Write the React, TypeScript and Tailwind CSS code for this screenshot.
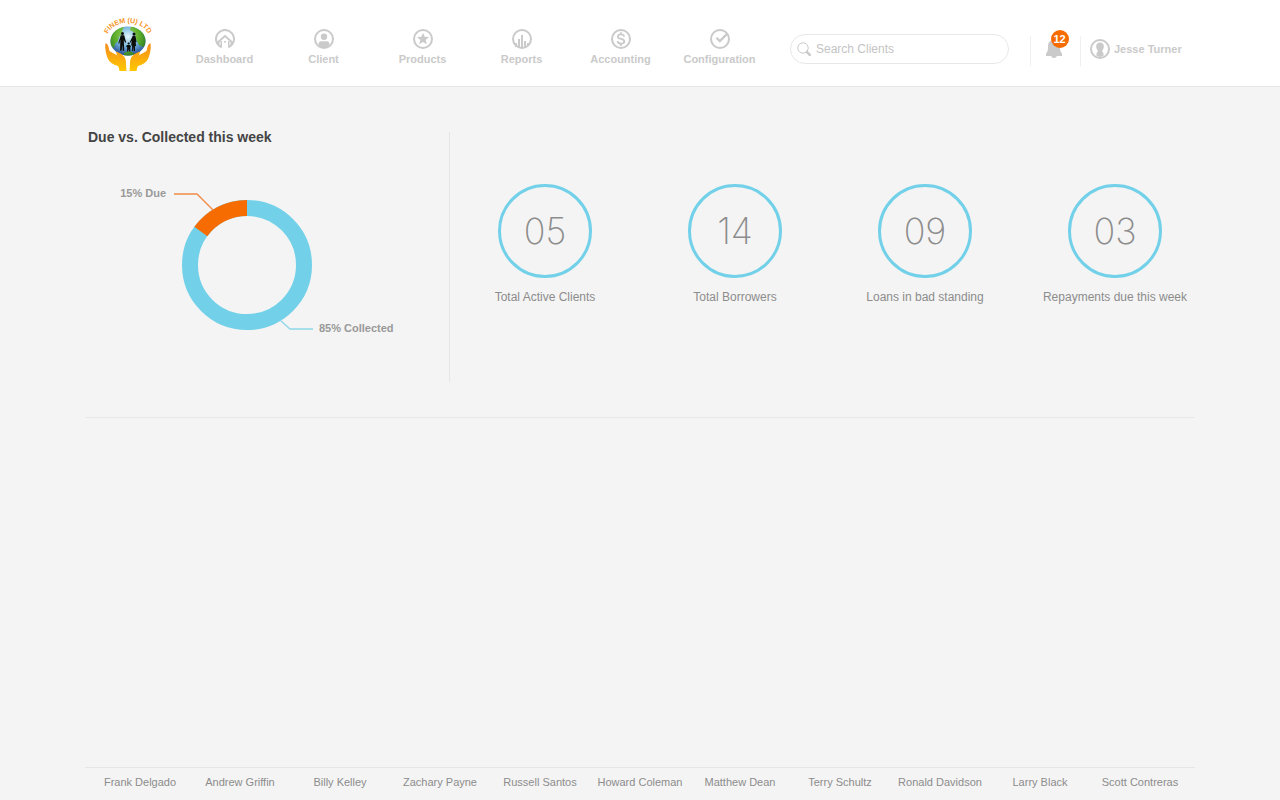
import React from 'react';

const ring = <circle cx="10" cy="10" r="9" fill="none" stroke="currentColor" strokeWidth="2" />;

function Icon({ children }: { children: React.ReactNode }) {
  return (
    <svg viewBox="0 0 20 20" className="h-5 w-5 shrink-0" aria-hidden="true">
      {children}
    </svg>
  );
}

const navItems = [
  {
    label: 'Dashboard',
    icon: (
      <Icon>
        <path d="M6 18A9 9 0 1 1 14 18" fill="none" stroke="currentColor" strokeWidth="2" />
        <path d="M2 14l8-7 8 7" fill="none" stroke="currentColor" strokeWidth="1.7" />
        <path d="M2 14.500l2.500-2.200V17zM18 14.500l-2.500-2.200V17zM5.500 12H7v7l-1.500-1zM13 12h1.500v6L13 19zM9.200 12h1.600v1.800H9.200z" fill="currentColor" />
      </Icon>
    ),
  },
  {
    label: 'Client',
    icon: (
      <Icon>
        {ring}
        <circle cx="10" cy="7.800" r="3.200" fill="currentColor" />
        <path d="M4.600 17v-2.200q0-2.500 2.600-2.500h5.600q2.600 0 2.600 2.500V17L10 19z" fill="currentColor" />
      </Icon>
    ),
  },
  {
    label: 'Products',
    icon: (
      <Icon>
        {ring}
        <path d="M10 3.800l1.700 4 4.300.3-3.300 2.800 1.100 4.300L10 12.900l-3.800 2.300 1.100-4.300L4 8.100l4.300-.3z" fill="currentColor" />
      </Icon>
    ),
  },
  {
    label: 'Reports',
    icon: (
      <Icon>
        {ring}
        <path d="M3 14h2v4H3zM6 10h2v9H6zM9 6h2v13H9zM12 12h2v7h-2zM15 14h2v3h-2z" fill="currentColor" />
      </Icon>
    ),
  },
  {
    label: 'Accounting',
    icon: (
      <Icon>
        {ring}
        <path
          d="M13.200 7.600C12.900 6.100 11.700 5.400 10 5.400S6.900 6.200 6.900 7.700c0 3.100 6.400 1.400 6.400 4.600 0 1.500-1.400 2.400-3.200 2.400-2 0-3.300-.9-3.500-2.600M10 3.300v2.200M10 14.700v2.200"
          fill="none"
          stroke="currentColor"
          strokeWidth="1.800"
        />
      </Icon>
    ),
  },
  {
    label: 'Configuration',
    icon: (
      <Icon>
        {ring}
        <path d="M6.500 8.800l3.300 3.300 7-7" fill="none" stroke="currentColor" strokeWidth="2.200" />
      </Icon>
    ),
  },
];

const stats = [
  { value: '05', label: 'Total Active Clients' },
  { value: '14', label: 'Total Borrowers' },
  { value: '09', label: 'Loans in bad standing' },
  { value: '03', label: 'Repayments due this week' },
];

const people = [
  'Frank Delgado',
  'Andrew Griffin',
  'Billy Kelley',
  'Zachary Payne',
  'Russell Santos',
  'Howard Coleman',
  'Matthew Dean',
  'Terry Schultz',
  'Ronald Davidson',
  'Larry Black',
  'Scott Contreras',
];

function Logo() {
  return (
    <svg viewBox="0 0 56 62" className="h-[62px] w-14" role="img" aria-label="Finem (U) Ltd">
      <defs>
        <radialGradient id="globe" cx="0.5" cy="0.35" r="0.65">
          <stop offset="0" stopColor="#e4f5fb" />
          <stop offset="0.5" stopColor="#7ab8dc" />
          <stop offset="1" stopColor="#234b96" />
        </radialGradient>
        <radialGradient id="land" gradientUnits="userSpaceOnUse" cx="27" cy="24" r="21">
          <stop offset="0" stopColor="#a4d66a" />
          <stop offset="0.6" stopColor="#5aae28" />
          <stop offset="1" stopColor="#2f7a2a" />
        </radialGradient>
        <linearGradient id="palm" x1="0" y1="0" x2="0" y2="1">
          <stop offset="0" stopColor="#f58a1e" />
          <stop offset="1" stopColor="#ffc800" />
        </linearGradient>
        <clipPath id="disc">
          <ellipse cx="28" cy="29" rx="17.500" ry="14.500" />
        </clipPath>
        <path id="arc" d="M7 25C11 6 45 6 49 25" />
      </defs>
      <text fill="#f7941d" className="font-['Liberation_Sans',sans-serif] text-[7px] font-bold">
        <textPath href="#arc" startOffset="50%" textAnchor="middle">
          FINEM (U) LTD
        </textPath>
      </text>
      <ellipse cx="28" cy="29" rx="17.500" ry="14.500" fill="url(#globe)" />
      <g clipPath="url(#disc)" fill="url(#land)">
        <path d="M9 28q2-9 9-12l6-1-2 4 1 2-4 4-1 4-3 3-1 4-5-3z" />
        <path d="M31 15l7 0 9 8 1 8-5 4-4-2-3-6-1-6-5-3z" />
        <path d="M24 41l5-2 5 2 1 4H23z" />
      </g>
      <g fill="#0b0d08">
        <circle cx="22.500" cy="21.500" r="1.500" />
        <path d="M20.800 23.300h3.400l1.900 7-1 .5-1.300-3 .4 11h-1.500l-.4-6-.7 6h-1.500l.2-11-1 4-1-.5z" />
        <circle cx="34" cy="22" r="1.500" />
        <path d="M32.800 23.700h2.600l1.200 6.300-.9.300.4 3.700h-1.100v5h-1.100l-.3-5-.4 5h-1.100v-5.500h-.9l.4-5-1.300 2.500-.6-.8z" />
        <circle cx="28.700" cy="31.500" r="1.100" />
        <path d="M27.300 33h2.800l1 2-.9.300.1 4.200h-1l-.6-2.500-.6 2.500h-1l.1-4.200-1.300-1z" />
      </g>
      <path
        d="M5.500 31q2.500 1 3 4l1 4q4 2.500 8 4.500-2-3-1-4 4.500 1.500 8 5.500 2 3 1.500 7l.5 7h-7q-.5-4-1.500-5Q10 52 7.500 46 4.500 38 5.500 31z"
        fill="url(#palm)"
      />
      <path
        d="M50.500 31q-2.500 1-3 4l-1 4q-4 2.500-8 4.500 2-3 1-4-4.500 1.500-8 5.500-2 3-1.500 7l-.5 7h7q.5-4 1.500-5Q46 52 48.500 46 51.500 38 50.500 31z"
        fill="url(#palm)"
      />
    </svg>
  );
}

export default function App() {
  return (
    <div className="flex min-h-screen flex-col bg-[#f4f4f4] font-['Liberation_Sans',Arial,sans-serif] text-[#8c8c8c]">
      <header className="border-b border-[#e5e5e5] bg-white">
        <div className="mx-auto flex h-[86px] max-w-[1110px] items-center text-[#cacaca]">
          <a href="#home" className="flex w-[90px] shrink-0 pl-[15px]">
            <Logo />
          </a>
          <nav className="mt-2 grid w-[594px] grid-cols-6">
            {navItems.map((item) => (
              <a
                key={item.label}
                href={`#${item.label.toLowerCase()}`}
                className="flex flex-col items-center gap-1 text-[11px] leading-3 font-bold"
              >
                {item.icon}
                {item.label}
              </a>
            ))}
          </nav>
          <label className="mt-3 ml-[21px] flex h-[30px] w-[219px] items-center gap-1 rounded-full border border-[#e8e8e8] px-1.5">
            <svg viewBox="0 0 15 15" className="h-[15px] w-[15px] shrink-0" aria-hidden="true">
              <circle cx="6" cy="6" r="5.200" fill="none" stroke="currentColor" strokeWidth="1" />
              <path d="M9.800 9.800l3 3" fill="none" stroke="currentColor" strokeWidth="2.600" strokeLinecap="round" />
            </svg>
            <input
              type="search"
              aria-label="Search Clients"
              placeholder="Search Clients"
              className="w-full min-w-0 bg-transparent text-[12px] outline-none placeholder:text-[#c4c4c4]"
            />
          </label>
          <div className="mt-4 ml-[21px] flex h-[30px] w-[51px] items-center justify-center border-x border-[#f0f0f0] pr-1">
            <button type="button" aria-label="Notifications, 12 unread" className="relative -mt-1 h-[18px] w-4">
              <svg viewBox="0 0 16 18" className="h-[18px] w-4" aria-hidden="true">
                <path
                  d="M8 0c4 0 6 2.500 6 6 0 4 .3 6 2 7.500V16h-5.200c-.2 1.300-1.200 2-2.800 2s-2.600-.7-2.800-2H0v-2.500C1.700 12 2 10 2 6c0-3.500 2-6 6-6z"
                  fill="currentColor"
                />
              </svg>
              <span className="absolute -top-2.5 left-[5px] flex h-[18px] w-[18px] items-center justify-center rounded-full bg-[#f76c00] text-[11px] font-bold text-white">
                12
              </span>
            </button>
          </div>
          <a href="#profile" className="mt-3 ml-[9px] flex items-center gap-1 text-[11px] font-bold whitespace-nowrap">
            <Icon>
              {ring}
              <path
                d="M10 3.500c2.700 0 4 1.700 3.800 4.300-.1 1.800-.8 3-1.500 3.800-.2 1.500.2 2 1.200 2.400V17L10 18l-3.500-1v-3c1-.4 1.400-.9 1.200-2.400-.7-.8-1.400-2-1.500-3.800C6 5.200 7.300 3.500 10 3.500z"
                fill="currentColor"
              />
            </Icon>
            Jesse Turner
          </a>
        </div>
      </header>

      <main className="mx-auto flex w-full max-w-[1110px] grow flex-col">
        <div className="flex border-b border-[#e8e8e8] pt-[45px] pb-[35px]">
          <section className="h-[250px] w-[365px] shrink-0 border-r border-[#e5e5e5] pl-[3px]">
            <h1 className="-mt-1 text-[14px] leading-[18px] font-bold text-[#444444]">Due vs. Collected this week</h1>
            <svg viewBox="88 146 361 200" className="h-[200px] w-full" role="img" aria-label="15% due, 85% collected">
              <g fill="none" strokeWidth="16">
                <circle cx="247" cy="265" r="57" stroke="#72d1e9" />
                <path d="M200.890 231.500A57 57 0 0 1 247 208" stroke="#f76c00" />
              </g>
              <path d="M174 194h23l16 16" fill="none" stroke="#f08a45" strokeWidth="1.300" />
              <path d="M280 320l10 9h23" fill="none" stroke="#8fd8ea" strokeWidth="1.300" />
              <g fill="#999999" className="text-[11px] font-bold">
                <text x="166" y="197" textAnchor="end">
                  15% Due
                </text>
                <text x="319" y="332">85% Collected</text>
              </g>
            </svg>
          </section>
          <section className="-mr-[15px] grid grow grid-cols-4 pt-[52px]">
            {stats.map((stat) => (
              <div key={stat.label} className="flex flex-col items-center gap-[11px] text-center">
                <div className="flex h-[94px] w-[94px] items-center justify-center rounded-full border-3 border-[#72d1e9] font-['Inter','Liberation_Sans',sans-serif] text-[36px] font-extralight text-[#8c8c8c]">
                  {stat.value}
                </div>
                <p className="text-[12px] leading-4 whitespace-nowrap">{stat.label}</p>
              </div>
            ))}
          </section>
        </div>
        <footer className="mt-auto border-t border-[#e5e5e5] px-[5px] pb-1">
          <ul className="grid h-7 grid-cols-11 items-center text-center text-[11px] whitespace-nowrap">
            {people.map((name) => (
              <li key={name}>
                <a href={`#${name.toLowerCase().replace(' ', '-')}`}>{name}</a>
              </li>
            ))}
          </ul>
        </footer>
      </main>
    </div>
  );
}
